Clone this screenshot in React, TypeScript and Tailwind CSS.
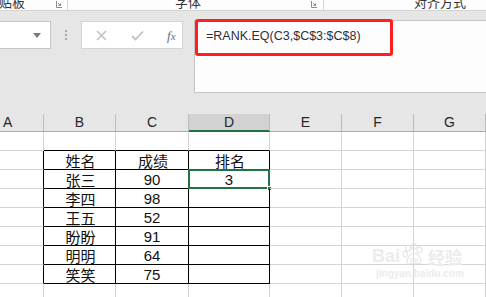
import React from 'react';

const cols = [
  { key: 'A', w: 'w-[44px]', label: 'A' },
  { key: 'B', w: 'w-[72px]', label: 'B' },
  { key: 'C', w: 'w-[73px]', label: 'C' },
  { key: 'D', w: 'w-[81px]', label: 'D' },
  { key: 'E', w: 'w-[72px]', label: 'E' },
  { key: 'F', w: 'w-[72px]', label: 'F' },
  { key: 'G', w: 'w-[72px]', label: 'G' },
];

// rows of column B, C, D content; null row = empty
const rows: (string[] | null)[] = [
  null,
  ['姓名', '成绩', '排名'],
  ['张三', '90', '3'],
  ['李四', '98', ''],
  ['王五', '52', ''],
  ['盼盼', '91', ''],
  ['明明', '64', ''],
  ['笑笑', '75', ''],
  null,
  null,
];

function Launcher() {
  return (
    <svg width="6" height="7" viewBox="0 0 6 7" className="shrink-0">
      <path d="M0.5 0 V6.5 H6" fill="none" stroke="#8a8a8a" strokeWidth="1" />
      <path d="M2 2 L4.5 4.5 M4.5 2.5 V4.5 H2.5" fill="none" stroke="#8a8a8a" strokeWidth="1" />
    </svg>
  );
}

function Ribbon() {
  return (
    <div className="flex h-[11px] bg-[#fdfdfd] border-b border-[#d4d4d4] overflow-hidden text-[13px] leading-[13px] text-[#333]" style={{ fontFamily: '"Noto Sans CJK SC", sans-serif' }}>
      <div className="w-[68px] shrink-0 flex justify-between border-r border-[#d4d4d4]">
        <span className="-ml-[14px] -mt-[5px] whitespace-nowrap">剪贴板</span>
        <div className="mr-[5px] mt-[1px]"><Launcher /></div>
      </div>
      <div className="w-[256px] shrink-0 flex justify-between border-r border-[#d4d4d4]">
        <span className="ml-[107px] -mt-[5px] whitespace-nowrap">字体</span>
        <div className="mr-[6px] mt-[1px]"><Launcher /></div>
      </div>
      <div className="flex-1">
        <span className="ml-[90px] -mt-[5px] block whitespace-nowrap">对齐方式</span>
      </div>
    </div>
  );
}

function FormulaBar() {
  return (
    <div className="flex items-start h-[92px] bg-[#e6e6e6] pt-[9px]">
      {/* Name box */}
      <div className="mt-[1px] w-[51px] h-[28px] bg-white border border-l-0 border-[#c6c6c6] flex items-center justify-end pr-[9px] shrink-0">
        <svg width="8" height="5" viewBox="0 0 8 5">
          <path d="M0 0 H8 L4 5 Z" fill="#7a7a7a" />
        </svg>
      </div>
      {/* dots */}
      <div className="mt-[10px] ml-[14px] flex flex-col gap-[2px] shrink-0">
        <div className="w-[2px] h-[2px] bg-[#a8a8a8]" />
        <div className="w-[2px] h-[2px] bg-[#a8a8a8]" />
        <div className="w-[2px] h-[2px] bg-[#a8a8a8]" />
      </div>
      {/* cancel / enter / fx */}
      <div className="mt-[1px] ml-[14px] w-[102px] h-[28px] bg-white border border-[#d4d4d4] flex items-center shrink-0">
        <svg width="11" height="11" viewBox="0 0 11 11" className="ml-[14px]">
          <path d="M1 1 L10 10 M10 1 L1 10" stroke="#c2c2c2" strokeWidth="1.6" fill="none" />
        </svg>
        <svg width="13" height="11" viewBox="0 0 13 11" className="ml-[24px]">
          <path d="M1 6 L4.5 9.5 L12 1.5" stroke="#c2c2c2" strokeWidth="1.8" fill="none" />
        </svg>
        <span className="ml-[23px] italic text-[13px] text-[#6b6b6b] leading-none" style={{ fontFamily: '"Liberation Serif", serif' }}>
          f<span className="text-[11px]">x</span>
        </span>
      </div>
      {/* formula input */}
      <div className="relative ml-[11px] flex-1 h-[73px] bg-[#fdfdfd] border border-r-0 border-[#c6c6c6]">
        <div className="pl-[11px] pt-[7px] text-[12.5px] leading-[16px] text-[#2f2f3a]" style={{ fontFamily: '"Liberation Sans", Arial, sans-serif' }}>
          =RANK.EQ(C3,$C$3:$C$8)
        </div>
        {/* red annotation box */}
        <div className="absolute left-[0px] -top-[2px] w-[198px] h-[37px] border-[3px] border-[#ff1f1f] rounded-[3px]" />
      </div>
    </div>
  );
}

function HeaderRow() {
  return (
    <div className="flex h-[18px] bg-[#e6e6e6] mt-[11px]" style={{ fontFamily: '"Liberation Sans", Arial, sans-serif' }}>
      {cols.map((c) => {
        const active = c.key === 'D';
        return (
          <div
            key={c.key}
            className={
              c.w +
              ' shrink-0 flex items-center text-[14px] text-[#262626] border-r border-[#bcbcbc] ' +
              (active ? 'bg-[#d2d2d2] border-b-2 border-b-[#217346] justify-center' : 'border-b border-b-[#ababab] ') +
              (c.key === 'A' ? ' justify-start pl-[3px]' : active ? '' : ' justify-center')
            }
          >
            {c.label}
          </div>
        );
      })}
    </div>
  );
}

function Grid() {
  return (
    <div className="bg-white">
      {rows.map((r, ri) => {
        const inTable = ri >= 1 && ri <= 7;
        const aboveTable = ri === 0;
        return (
          <div key={ri} className="flex h-[19px]">
            {cols.map((c, ci) => {
              const tableCol = ci >= 1 && ci <= 3;
              const rightBlack = inTable && ci >= 0 && ci <= 3;
              const bottomBlack = (inTable || aboveTable) && tableCol;
              const text = r && tableCol ? r[ci - 1] : '';
              const cjk = /[\u4e00-\u9fff]/.test(text);
              const selected = ri === 2 && c.key === 'D';
              return (
                <div
                  key={c.key}
                  className={
                    c.w +
                    ' shrink-0 relative flex items-center justify-center text-[#111] leading-none border-r border-b ' +
                    (rightBlack ? 'border-r-black ' : 'border-r-[#d4d4d4] ') +
                    (bottomBlack ? 'border-b-black ' : 'border-b-[#d4d4d4] ') +
                    (cjk ? 'text-[15px] pl-[2px]' : 'text-[15px]')
                  }
                  style={{ fontFamily: cjk ? '"Noto Sans CJK SC", sans-serif' : '"Liberation Sans", Arial, sans-serif' }}
                >
                  {text}
                  {selected && (
                    <>
                      <div className="absolute -left-[1px] -top-[1px] -right-[1px] -bottom-[1px] border-2 border-[#217346]" />
                      <div className="absolute -right-[3px] -bottom-[3px] w-[5px] h-[5px] bg-[#217346] border border-white" />
                    </>
                  )}
                </div>
              );
            })}
          </div>
        );
      })}
    </div>
  );
}

function Watermark() {
  return (
    <div className="absolute left-[372px] top-[243px] flex flex-col items-start pointer-events-none select-none">
      <div className="flex items-end gap-[2px] text-[#ececec] font-bold leading-none" style={{ fontFamily: '"Liberation Sans", sans-serif' }}>
        <span className="text-[18px]">Bai</span>
        <svg width="22" height="22" viewBox="0 0 22 22">
          <g fill="none" stroke="#e6e6e6" strokeWidth="1.2">
            <ellipse cx="6" cy="5" rx="2.5" ry="3" />
            <ellipse cx="12" cy="3.5" rx="2.5" ry="3" />
            <ellipse cx="17.5" cy="7" rx="2.5" ry="3" />
            <ellipse cx="3" cy="11" rx="2.3" ry="2.8" />
            <path d="M5 20 C5 14 9 10 12 10 C16 10 19 15 19 19 C19 21 16 21 12 20 C9 21 5 21 5 20 Z" />
          </g>
          <text x="8" y="19" fontSize="7" fill="#e6e6e6" fontFamily="Liberation Sans, sans-serif">du</text>
        </svg>
        <span className="text-[17px] ml-[2px]" style={{ fontFamily: '"Noto Sans CJK SC", sans-serif' }}>经验</span>
      </div>
      <div className="mt-[4px] ml-[4px] text-[10px] font-bold text-[#ececec] leading-none" style={{ fontFamily: '"Liberation Sans", sans-serif' }}>
        jingyan.baidu.com
      </div>
    </div>
  );
}

export default function App() {
  return (
    <div className="relative w-[486px] h-[297px] overflow-hidden bg-[#e6e6e6]">
      <Ribbon />
      <FormulaBar />
      <HeaderRow />
      <Grid />
      <Watermark />
    </div>
  );
}
